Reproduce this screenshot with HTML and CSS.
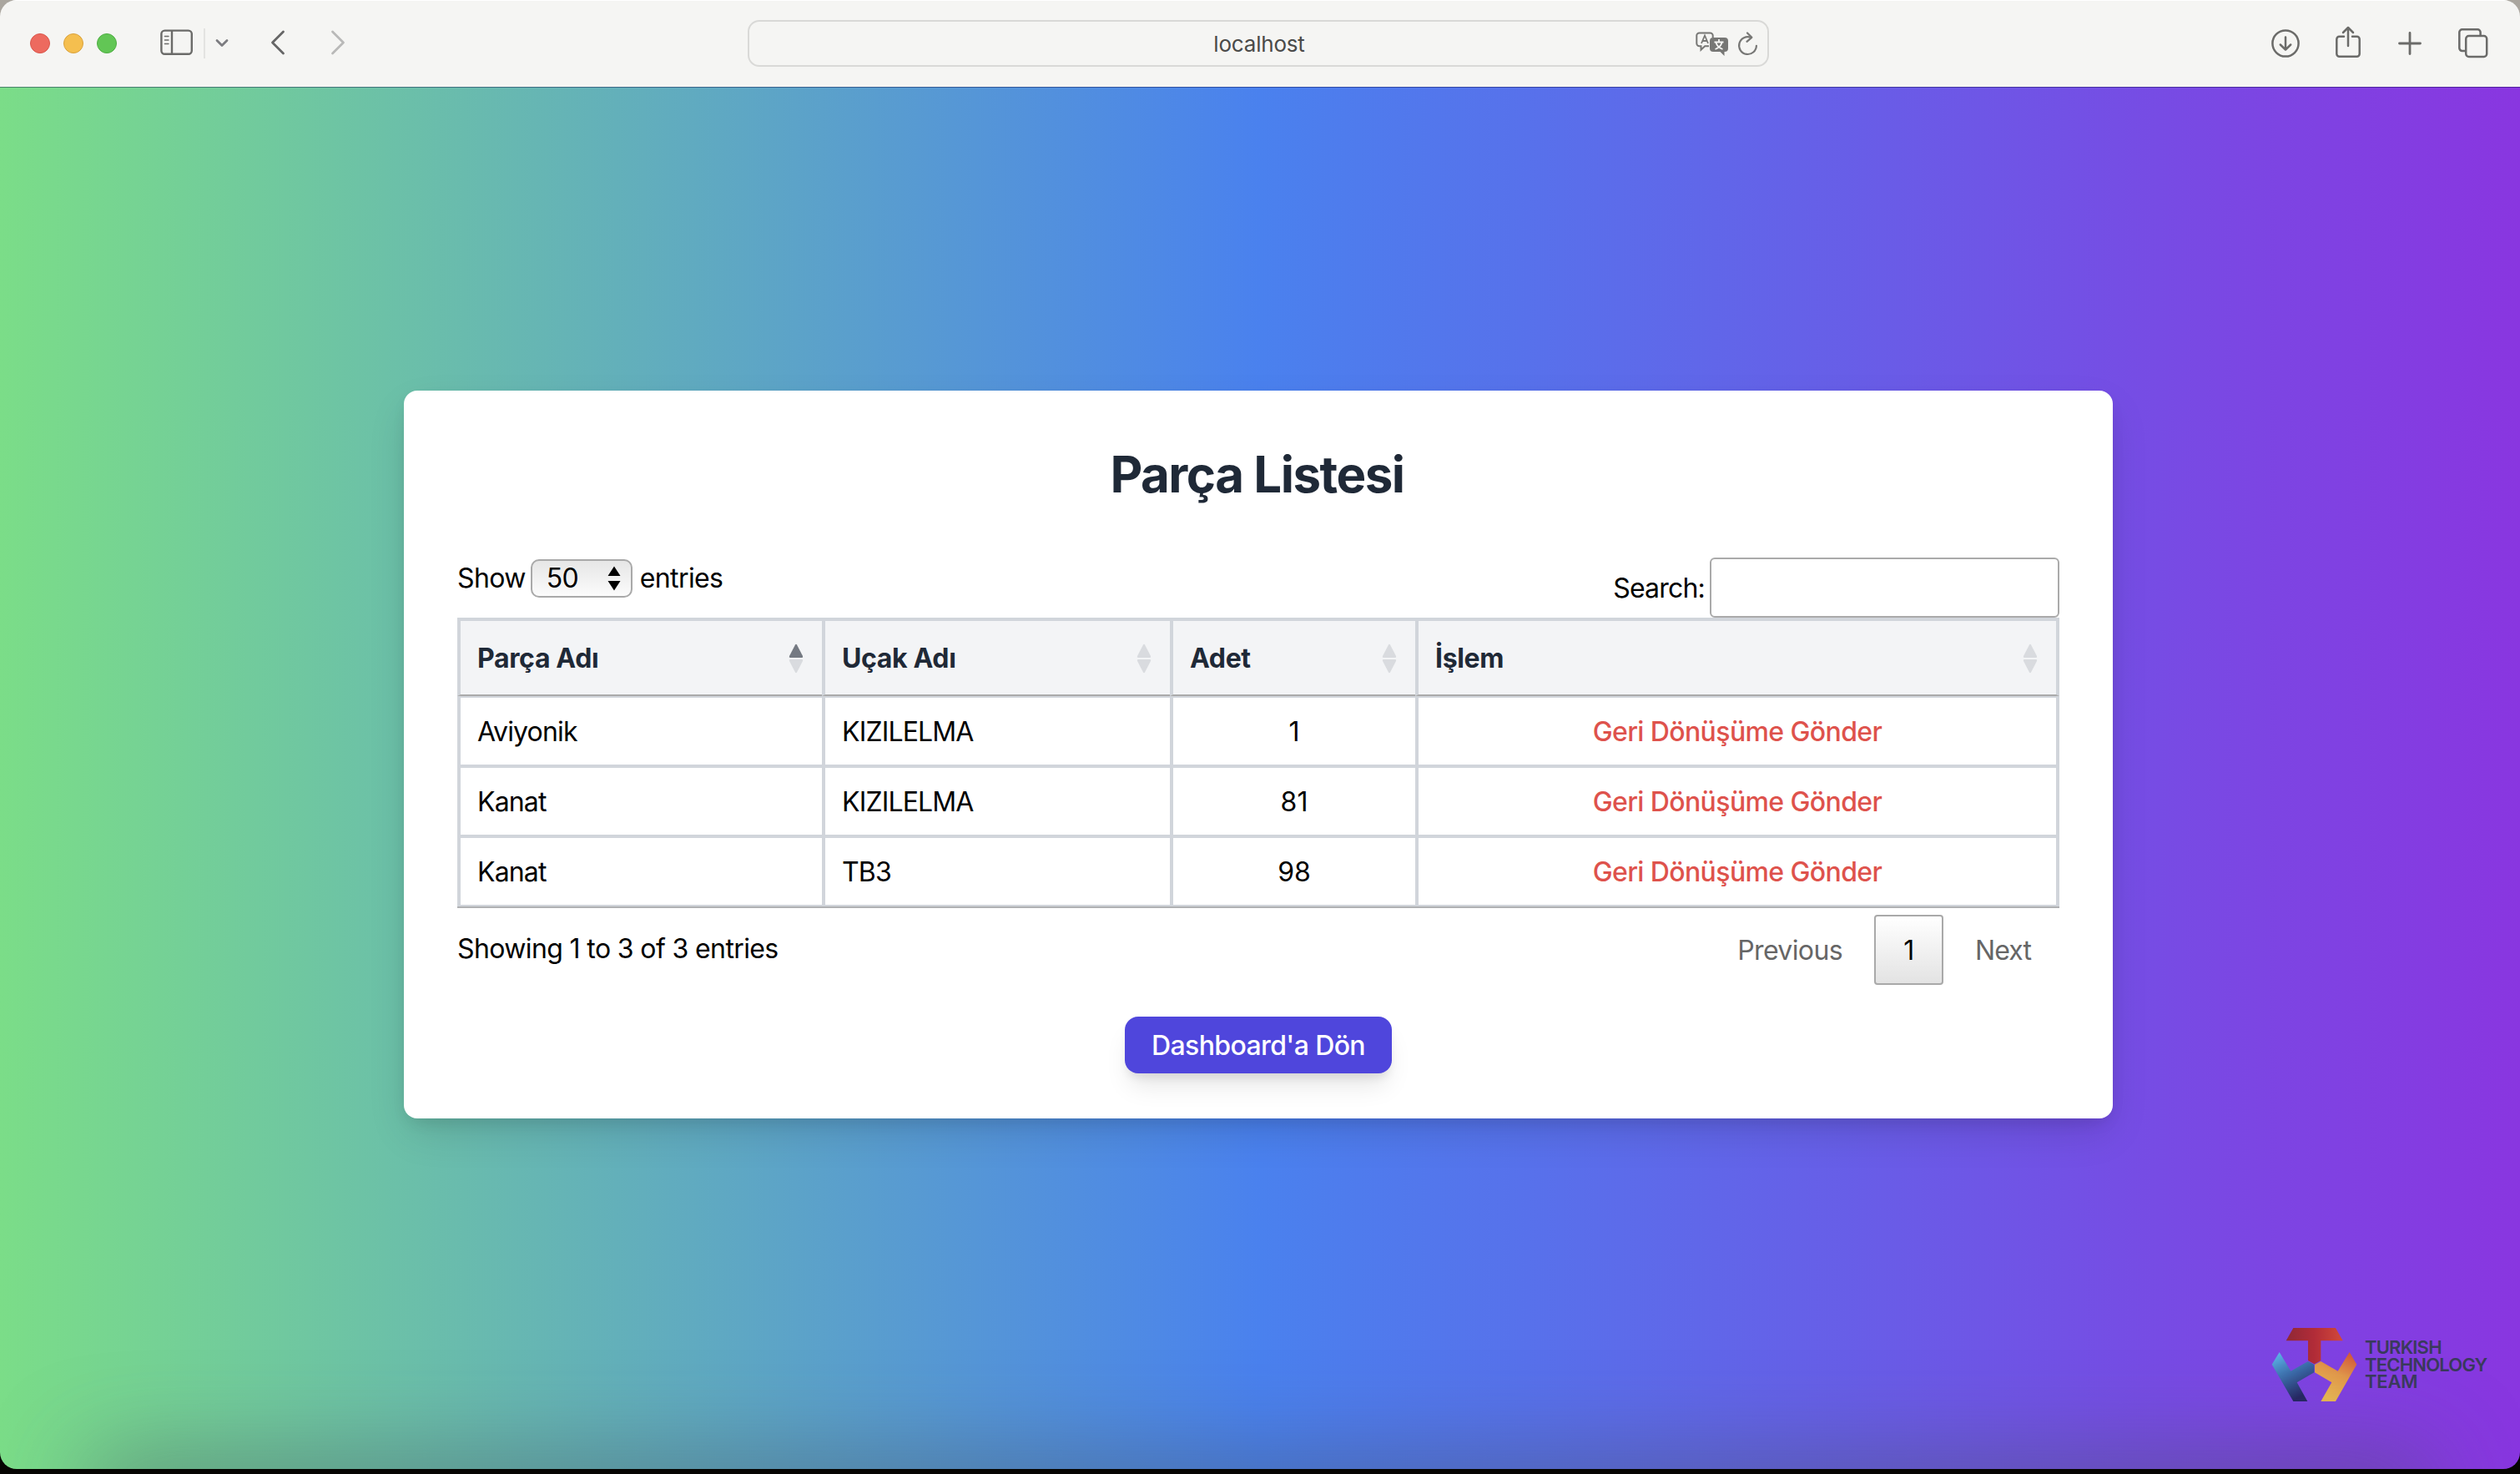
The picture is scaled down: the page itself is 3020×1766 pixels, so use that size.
FILE: index.html
```html
<!DOCTYPE html>
<html lang="tr">
<head>
<meta charset="utf-8">
<title>Parça Listesi</title>
<link rel="stylesheet" href="styles.css">
</head>
<body>
<div class="window">
  <header class="toolbar">
    <div class="side left">
      <span class="light red"></span><span class="light yellow"></span><span class="light green"></span>
      <svg class="ic sidebar" width="40" height="32" viewBox="0 0 40 32"><g fill="none" stroke="#6b6b69" stroke-width="2.4"><rect x="1.4" y="1.6" width="36.4" height="28.2" rx="4"/><path d="M14 2v28"/><path d="M5.5 8.5h4.4M5.5 13h4.4M5.5 17.5h4.4" stroke-width="1.6" stroke-linecap="round"/></g></svg>
      <span class="divider"></span>
      <svg class="ic chev" width="16" height="12" viewBox="0 0 16 12"><path d="M2 2.5l6 6 6-6" fill="none" stroke="#7c7c80" stroke-width="2.8" stroke-linecap="round" stroke-linejoin="round"/></svg>
      <svg class="ic back" width="18" height="30" viewBox="0 0 18 30"><path d="M15.5 2L2.5 15l13 13" fill="none" stroke="#666" stroke-width="2.8" stroke-linecap="round" stroke-linejoin="round"/></svg>
      <svg class="ic fwd" width="18" height="30" viewBox="0 0 18 30"><path d="M2.5 2l13 13-13 13" fill="none" stroke="#b9b9b8" stroke-width="2.8" stroke-linecap="round" stroke-linejoin="round"/></svg>
    </div>
    <div class="address">
      <span class="host">localhost</span>
      <span class="address-icons">
        <svg width="40" height="30" viewBox="0 0 40 30"><path d="M4.500 1.400h13a3.200 3.200 0 0 1 3.200 3.200v2.400M16 17.200h-4.800l-4.700 4.500v-4.500h-2a3.200 3.200 0 0 1-3.200-3.200v-9.400a3.200 3.200 0 0 1 3.200-3.200" fill="none" stroke="#777775" stroke-width="2"/><path d="M7 14l4-9.500 4 9.500M8.400 11h5.200" fill="none" stroke="#777775" stroke-width="1.800"/><path d="M21 7h14a4 4 0 0 1 4 4v9a4 4 0 0 1-4 4h-.5v5l-5-5H21a4 4 0 0 1-4-4v-9a4 4 0 0 1 4-4z" fill="#777775"/><path d="M28 9v3M22.500 12.500h11M24.500 13c1 4 4 6.500 8 8M31.500 13c-1 4-4 6.500-8 8" fill="none" stroke="#f5f5f3" stroke-width="1.800"/></svg>
        <svg width="26" height="30" viewBox="0 0 26 30"><path d="M16.500 7a10.400 10.400 0 1 0 6.400 9.800" fill="none" stroke="#777775" stroke-width="2.200" stroke-linecap="round"/><path d="M12 1.500l5.300 5.300-5.800 5" fill="none" stroke="#777775" stroke-width="2.200" stroke-linecap="round" stroke-linejoin="round"/></svg>
      </span>
    </div>
    <div class="side right">
      <svg width="36" height="40" viewBox="0 0 36 40"><g fill="none" stroke="#6b6b69" stroke-width="2.5" stroke-linecap="round" stroke-linejoin="round"><circle cx="18" cy="21" r="15.600"/><path d="M18 13.500v15M11.800 22.500l6.200 6.200 6.200-6.200"/></g></svg>
      <svg width="32" height="40" viewBox="0 0 32 40"><g fill="none" stroke="#6b6b69" stroke-width="2.5" stroke-linecap="round" stroke-linejoin="round"><path d="M11 12.800H5.500a3.200 3.200 0 0 0-3.200 3.200v17.600a3.200 3.200 0 0 0 3.200 3.200h21a3.200 3.200 0 0 0 3.200-3.200V16a3.200 3.200 0 0 0-3.200-3.200H21M16 24V2.500M10 8l6-6 6 6"/></g></svg>
      <svg class="plus" width="30" height="40" viewBox="0 0 30 40"><path d="M15 8.500v25M2.500 21h25" fill="none" stroke="#6b6b69" stroke-width="2.800" stroke-linecap="round"/></svg>
      <svg class="tabs" width="36" height="40" viewBox="0 0 36 40"><g fill="none" stroke="#6b6b69" stroke-width="2.500"><rect x="9.200" y="12" width="25" height="25" rx="3.500"/><path d="M9 30H4.700a3.400 3.400 0 0 1-3.400-3.400V7.700a3.400 3.400 0 0 1 3.400-3.400h18.500a3.400 3.400 0 0 1 3.400 3.400V12"/></g></svg>
    </div>
  </header>
  <main class="page">
    <section class="card">
      <h1>Parça Listesi</h1>
      <div class="controls">
        <label class="length"><span>Show</span>
          <span class="select"><span>50</span><svg width="16" height="30" viewBox="0 0 16 30"><path d="M8 .5l7.500 11.500H.5zM8 29.500L.5 18h15z"/></svg></span>
          <span>entries</span></label>
        <label class="search"><span>Search:</span><input type="text"></label>
      </div>
      <table>
        <colgroup><col class="c1"><col class="c2"><col class="c3"><col class="c4"></colgroup>
        <thead><tr>
          <th><div><span>Parça Adı</span><svg class="asc" width="18" height="36" viewBox="0 0 18 36"><path class="up" d="M8 1.500q1-1.500 2 0l7 13.500q.8 2-1 2H2q-1.800 0-1-2z"/><path class="dn" d="M8 34.500q1 1.500 2 0l7-13.500q.8-2-1-2H2q-1.800 0-1 2z"/></svg></div></th>
          <th><div><span>Uçak Adı</span><svg width="18" height="36" viewBox="0 0 18 36"><path class="up" d="M8 1.500q1-1.500 2 0l7 13.500q.8 2-1 2H2q-1.800 0-1-2z"/><path class="dn" d="M8 34.500q1 1.500 2 0l7-13.500q.8-2-1-2H2q-1.800 0-1 2z"/></svg></div></th>
          <th><div><span>Adet</span><svg width="18" height="36" viewBox="0 0 18 36"><path class="up" d="M8 1.500q1-1.500 2 0l7 13.500q.8 2-1 2H2q-1.800 0-1-2z"/><path class="dn" d="M8 34.500q1 1.500 2 0l7-13.500q.8-2-1-2H2q-1.800 0-1 2z"/></svg></div></th>
          <th><div><span>İşlem</span><svg width="18" height="36" viewBox="0 0 18 36"><path class="up" d="M8 1.500q1-1.500 2 0l7 13.500q.8 2-1 2H2q-1.800 0-1-2z"/><path class="dn" d="M8 34.500q1 1.500 2 0l7-13.500q.8-2-1-2H2q-1.800 0-1 2z"/></svg></div></th>
        </tr></thead>
        <tbody>
          <tr><td>Aviyonik</td><td>KIZILELMA</td><td class="num">1</td><td class="act"><a>Geri Dönüşüme Gönder</a></td></tr>
          <tr><td>Kanat</td><td>KIZILELMA</td><td class="num">81</td><td class="act"><a>Geri Dönüşüme Gönder</a></td></tr>
          <tr><td>Kanat</td><td>TB3</td><td class="num">98</td><td class="act"><a>Geri Dönüşüme Gönder</a></td></tr>
        </tbody>
      </table>
      <div class="footer">
        <span class="info">Showing 1 to 3 of 3 entries</span>
        <nav class="pager"><a class="prev">Previous</a><a class="current">1</a><a class="next">Next</a></nav>
      </div>
      <a class="button">Dashboard'a Dön</a>
    </section>
    <div class="logo">
      <svg width="104" height="90" viewBox="96 88 312 270">
        <defs>
          <linearGradient id="r" x1="0" x2="1"><stop offset="0" stop-color="#8f2836"/><stop offset=".5" stop-color="#b22c38"/><stop offset="1" stop-color="#d2493a"/></linearGradient>
          <linearGradient id="b" x1="0" y1="0" x2=".45" y2="1"><stop offset=".1" stop-color="#5bb0e6"/><stop offset=".5" stop-color="#3d70ad"/><stop offset="1" stop-color="#252663"/></linearGradient>
          <linearGradient id="y" x1=".9" y1="0" x2=".5" y2="1"><stop offset=".05" stop-color="#d2583c"/><stop offset=".5" stop-color="#e2984a"/><stop offset="1" stop-color="#ebb853"/></linearGradient>
        </defs>
        <path fill="url(#r)" d="M175 91H327L353 137H274V208L251 221L228 208V137H149z"/>
        <path fill="url(#b)" d="M125 178L166 246L228 211L250 223V251L188 287L226 355H175L98 222z"/>
        <path fill="url(#y)" d="M377 178L335 246L274 211L252 223V251L313 287L274 355H327L403 222z"/>
      </svg>
      <div class="logo-text"><span>TURKISH</span><span>TECHNOLOGY</span><span class="l3">TEAM</span></div>
    </div>
  </main>
</div>
</body>
</html>
```
FILE: styles.css
```css
* { box-sizing: border-box; }
body {
  margin: 0;
  height: 1766px;
  overflow: hidden;
  background: linear-gradient(#aaa69f 0 50%, #060502 50%);
  font: 32px/48px Inter, "Liberation Sans", sans-serif;
  letter-spacing: -.62px;
  color: #000;
}
svg { display: block; flex: none; }
.window { width: 3020px; height: 1760px; border-radius: 20px; overflow: hidden; display: flex; flex-direction: column; }

.toolbar { height: 104px; flex: none; background: #f5f5f3; box-shadow: inset 0 1px #fff; display: grid; grid-template-columns: 896px 1224px 1fr; align-items: center; }
.left { display: flex; align-items: center; padding-left: 36px; }
.light { width: 24px; height: 24px; border-radius: 50%; margin-right: 16px; border: 1px solid; }
.red { background: #ed6a5f; border-color: #d9564b; }
.yellow { background: #f5bf4f; border-color: #d9a23d; }
.green { background: #62c655; border-color: #4fae43; }
.sidebar { margin: -3px 0 0 36px; }
.divider { width: 2px; height: 36px; margin-left: 12px; background: #e3e3e1; }
.chev { margin-left: 12px; }
.back { margin: -2px 0 0 50px; }
.fwd { margin: -2px 0 0 54px; }
.address { height: 56px; border: 2px solid #d9d9d7; border-radius: 14px; display: grid; grid-template-columns: 1fr auto 1fr; align-items: center; }
.host { grid-column: 2; padding: 1px 0 0 2px; font-size: 26px; letter-spacing: -.2px; color: #4a4a49; }
.address-icons { justify-self: end; display: flex; gap: 10px; padding: 1px 10px 0 0; }
.right { display: flex; justify-content: flex-end; padding-right: 38px; }
.right svg { margin-left: 41px; margin-top: -3px; }
.right .plus { margin-left: 43px; }
.right .tabs { margin-left: 43px; }

.page {
  flex: 1;
  position: relative;
  padding-top: 364px;
  background: linear-gradient(90deg, #7bdd88 0%, #4a81ee 50%, #8936e0 100%);
  box-shadow: inset 0 1px 0 rgba(0, 0, 60, .4);
}
.page::after {
  content: "";
  position: absolute;
  left: 120px; right: 120px; bottom: -60px; height: 60px;
  box-shadow: 0 0 110px 12px rgba(70, 80, 90, .5);
}
.card {
  width: 2048px; height: 872px; margin-left: 484px; padding: 0 64px;
  background: #fff; border-radius: 16px;
  box-shadow: 0 20px 50px -6px rgba(0, 0, 0, .13), 0 8px 20px -6px rgba(0, 0, 0, .12);
}
h1 { margin: 0; padding: 64px 3px 0 0; height: 200px; text-align: center; font-size: 60px; line-height: 72px; letter-spacing: -1.500px; font-weight: 700; color: #1f2937; }
.controls { height: 72px; display: flex; justify-content: space-between; }
.length { display: flex; height: 50px; align-items: center; line-height: 50px; }
.select { width: 122px; height: 46px; margin: 0 9px 0 6px; padding: 0 12px 0 17px; display: flex; align-items: center; justify-content: space-between; letter-spacing: -.8px; border: 2px solid #a9a9a9; border-radius: 10px; background: linear-gradient(#e6e6e6, #fbfbfb); }
.search { display: flex; gap: 6px; letter-spacing: -.8px; }
.search span { padding-top: 13px; }
.search input { width: 419px; height: 72px; border: 2px solid #aaa; border-radius: 6px; background: #fff; }

table { width: 1920px; table-layout: fixed; border-collapse: separate; border-spacing: 0; border-bottom: 2px solid #b0b1b3; }
.c1 { width: 437px; } .c2 { width: 417px; } .c3 { width: 294px; }
th, td { border: 0 solid #d1d5db; border-top-width: 4px; border-left-width: 4px; padding: 2px 20px 0; text-align: left; }
th:last-child, td:last-child { border-right-width: 4px; }
th { height: 94px; padding-right: 22px; background: #f3f4f6; color: #1f2937; font-weight: 700; letter-spacing: -.350px; border-bottom: 2px solid #aaa; }
th div { display: flex; justify-content: space-between; align-items: center; }
th svg { margin-top: -1px; }
th .up, th .dn { fill: #d9dbdf; }
th .asc .up { fill: #747982; }
td { height: 84px; letter-spacing: -.850px; }
tbody tr:first-child td { height: 82px; border-top-width: 2px; }
tbody tr:last-child td { height: 86px; border-bottom-width: 2px; }
.num { text-align: center; letter-spacing: 0; }
.act { text-align: center; color: #de524c; font-weight: 500; letter-spacing: -.600px; }

.footer { display: flex; justify-content: space-between; padding-top: 8px; height: 130px; }
.info { padding-top: 17px; }
.pager { display: flex; line-height: 86px; color: #666; }
.current { width: 83px; height: 84px; margin: 0 38px; line-height: 82px; text-align: center; color: #000; border: 2px solid #a9a9a9; border-radius: 4px; background: linear-gradient(#fff, #e3e3e3); }
.next { padding-right: 34px; letter-spacing: -.900px; }
.button { display: block; width: 320px; height: 68px; margin: 0 auto; border-radius: 16px; background: #4f46dc; color: #fff; font-weight: 500; line-height: 70px; text-align: center; box-shadow: 0 20px 30px -6px rgba(0, 0, 0, .1), 0 8px 12px -4px rgba(0, 0, 0, .1); }

.logo { position: absolute; right: 38px; bottom: 80px; display: flex; gap: 8px; }
.logo-text { width: 148px; padding-top: 14px; font-size: 22px; line-height: 20.500px; letter-spacing: -.800px; font-weight: 600; color: #3a3a5c; display: flex; flex-direction: column; align-items: flex-start; }
.l3 { letter-spacing: -.200px; }
```
